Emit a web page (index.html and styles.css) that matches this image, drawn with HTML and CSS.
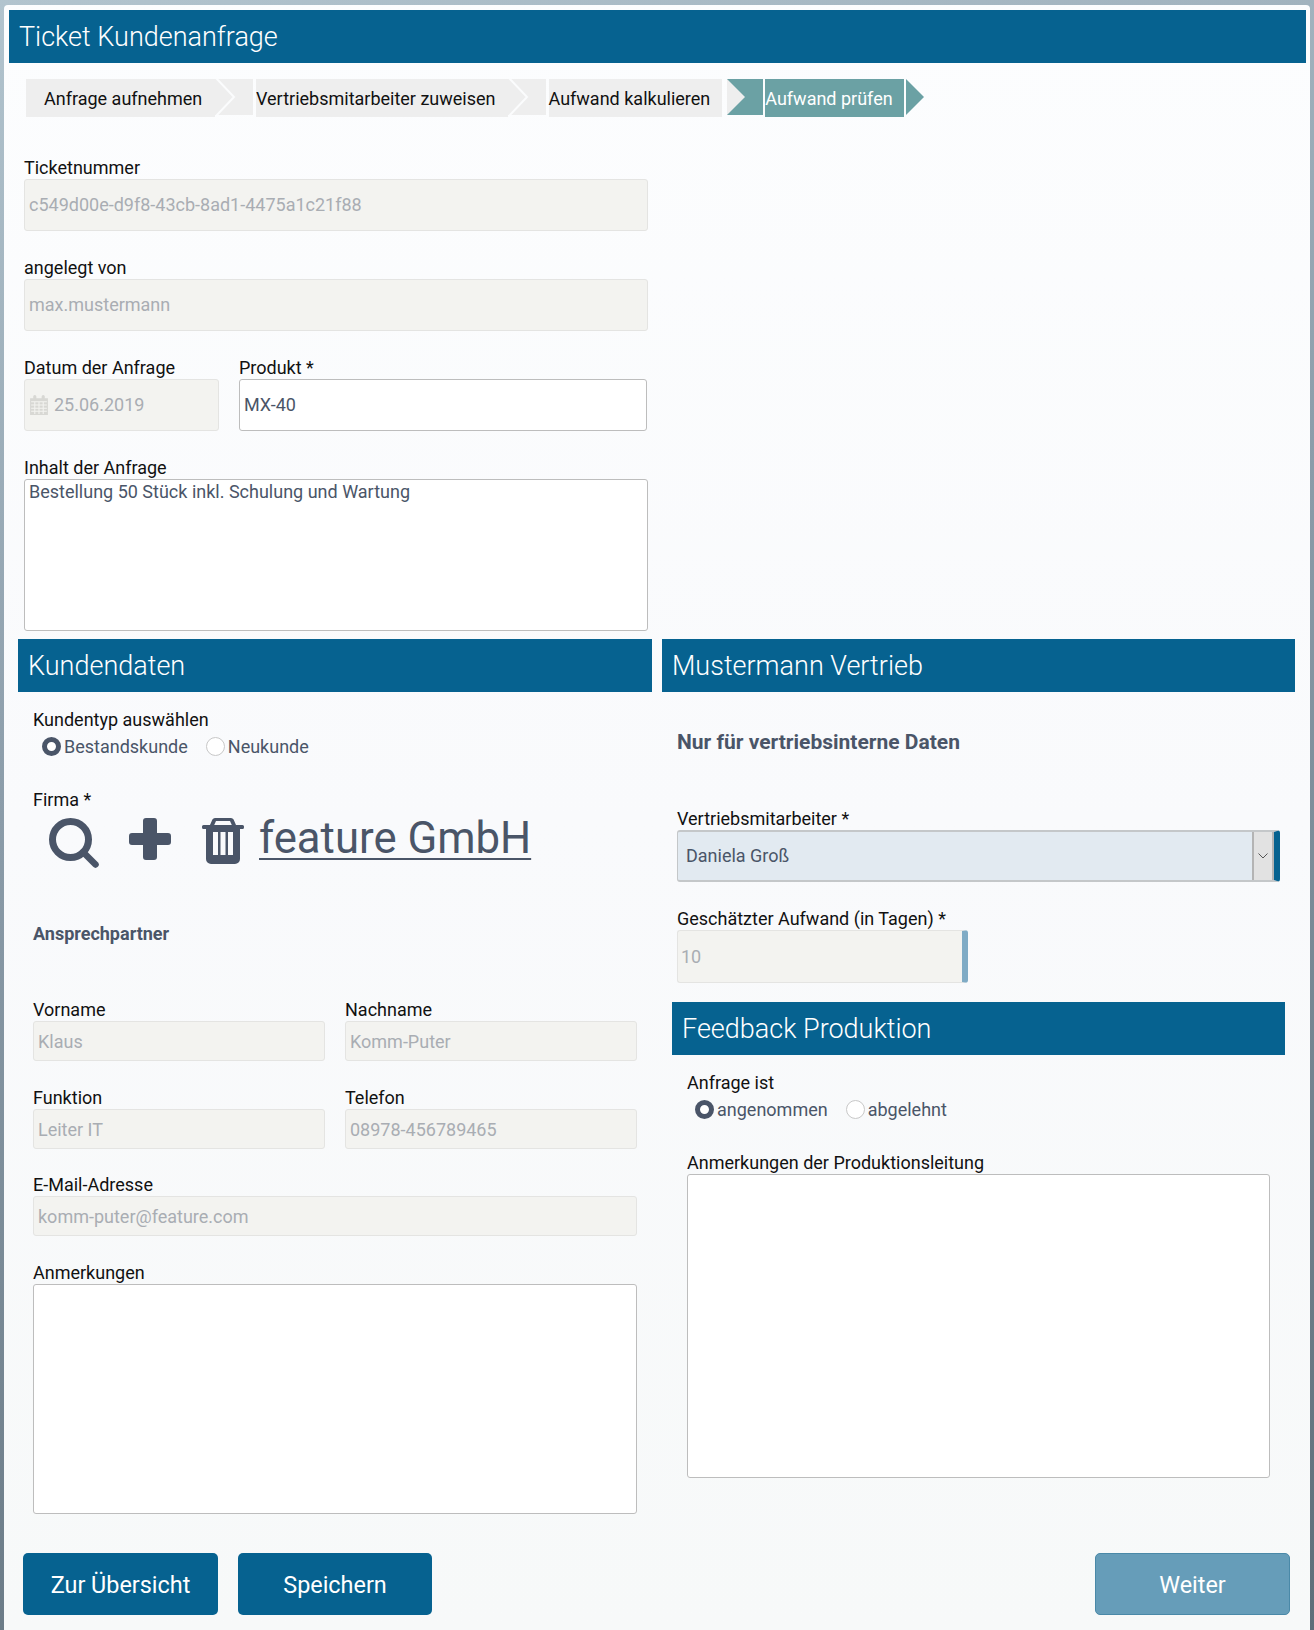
FILE: index.html
```html
<!DOCTYPE html>
<html lang="de">
<head>
<meta charset="utf-8">
<title>Ticket Kundenanfrage</title>
<link rel="stylesheet" href="styles.css">
</head>
<body>
<div class="panel">
  <h1 class="head head-main">Ticket Kundenanfrage</h1>

  <nav class="steps">
    <span class="step step-first">Anfrage aufnehmen</span>
    <svg class="chev" width="41" height="36" viewBox="0 0 41 36"><rect width="38" height="36" fill="#eeeeee"/><path d="M1 -1 L19 18 L1 37" fill="none" stroke="#fbfcfd" stroke-width="2"/></svg>
    <span class="step step-tight">Vertriebsmitarbeiter zuweisen</span>
    <svg class="chev" width="41" height="36" viewBox="0 0 41 36"><rect width="38" height="36" fill="#eeeeee"/><path d="M1 -1 L19 18 L1 37" fill="none" stroke="#fbfcfd" stroke-width="2"/></svg>
    <span class="step step-tight">Aufwand kalkulieren</span>
    <svg class="chev chev-active" width="42" height="36" viewBox="0 0 42 36"><rect x="3" width="36" height="36" fill="#6ba1a4"/><path d="M3 0 L21 18 L3 36 Z" fill="#eeeeee"/></svg>
    <span class="step step-active">Aufwand prüfen</span>
    <svg class="chev-end" width="18" height="36" viewBox="0 0 18 36"><path d="M0 0 L18 18 L0 36 Z" fill="#6ba1a4"/></svg>
  </nav>

  <section class="top-form">
    <div class="field gap-l">
      <div class="label">Ticketnummer</div>
      <div class="input tall disabled">c549d00e-d9f8-43cb-8ad1-4475a1c21f88</div>
    </div>
    <div class="field gap-l">
      <div class="label">angelegt von</div>
      <div class="input tall disabled">max.mustermann</div>
    </div>
    <div class="date-row gap-l">
      <div class="field">
        <div class="label">Datum der Anfrage</div>
        <div class="input tall disabled date">
          <svg class="cal" width="18" height="20" viewBox="0 0 17 19"><path fill="#d8d8d4" d="M0 3h3V1.500a1.500 1.500 0 0 1 3 0V3h5V1.500a1.500 1.500 0 0 1 3 0V3h3v16H0z"/><path stroke="#f3f3f0" stroke-width="1" fill="none" d="M1 6.500h15M1 9.500h15M1 12.500h15M1 15.500h15M4.500 6v12M8.500 6v12M12.500 6v12"/></svg>
          25.06.2019
        </div>
      </div>
      <div class="field">
        <div class="label">Produkt *</div>
        <div class="input tall">MX-40</div>
      </div>
    </div>
    <div class="field">
      <div class="label">Inhalt der Anfrage</div>
      <div class="input area area-top">Bestellung 50 Stück inkl. Schulung und Wartung</div>
    </div>
  </section>

  <div class="columns">
    <section class="col">
      <h2 class="head">Kundendaten</h2>
      <div class="col-body">
        <div class="label">Kundentyp auswählen</div>
        <div class="radios">
          <span class="radio on"></span><span class="radio-text">Bestandskunde</span>
          <span class="radio"></span><span class="radio-text">Neukunde</span>
        </div>
        <div class="label firma-label">Firma *</div>
        <div class="firma">
          <svg class="ico-search" width="50" height="50" viewBox="0 0 50 50"><circle cx="21.500" cy="21.500" r="18" fill="none" stroke="#4a5568" stroke-width="7"/><path d="M34 34 L46.500 46.500" stroke="#4a5568" stroke-width="6.500" stroke-linecap="round"/></svg>
          <svg class="ico-plus" width="42" height="42" viewBox="0 0 42 42"><path fill="#4a5568" d="M17 0h8a3 3 0 0 1 3 3v12h11a3 3 0 0 1 3 3v6a3 3 0 0 1-3 3H28v12a3 3 0 0 1-3 3h-8a3 3 0 0 1-3-3V27H3a3 3 0 0 1-3-3v-6a3 3 0 0 1 3-3h11V3a3 3 0 0 1 3-3z"/></svg>
          <svg class="ico-trash" width="42" height="46" viewBox="0 0 42 46"><path fill="#4a5568" fill-rule="evenodd" d="M13 0h16a3 3 0 0 1 2.600 1.500L34 7h6.500a1.500 1.500 0 0 1 1.500 1.500v1a1.500 1.500 0 0 1-1.500 1.500H38v30a5 5 0 0 1-5 5H9a5 5 0 0 1-5-5V11H1.500A1.500 1.500 0 0 1 0 9.500v-1A1.500 1.500 0 0 1 1.500 7H8l2.400-5.500A3 3 0 0 1 13 0zm1 3-1.800 4h17.600L28 3zM11 14v23h5V14zm7.500 0v23h5V14zM26 14v23h5V14z"/></svg>
          <a class="firma-link" href="#">feature GmbH</a>
        </div>
        <div class="sub-bold">Ansprechpartner</div>
        <div class="two">
          <div class="field"><div class="label">Vorname</div><div class="input short disabled">Klaus</div></div>
          <div class="field"><div class="label">Nachname</div><div class="input short disabled">Komm-Puter</div></div>
          <div class="field"><div class="label">Funktion</div><div class="input short disabled">Leiter IT</div></div>
          <div class="field"><div class="label">Telefon</div><div class="input short disabled">08978-456789465</div></div>
          <div class="field span"><div class="label">E-Mail-Adresse</div><div class="input short disabled">komm-puter@feature.com</div></div>
          <div class="field span"><div class="label">Anmerkungen</div><div class="input area area-left"></div></div>
        </div>
      </div>
    </section>

    <section class="col">
      <h2 class="head">Mustermann Vertrieb</h2>
      <div class="col-body">
        <div class="note">Nur für vertriebsinterne Daten</div>
        <div class="field sel-field">
          <div class="label">Vertriebsmitarbeiter *</div>
          <div class="input tall select">
            <span class="select-val">Daniela Groß</span>
            <span class="select-btn"><svg width="10" height="6" viewBox="0 0 10 6"><path d="M0.500 0.500 L5 5 L9.500 0.500" fill="none" stroke="#555" stroke-width="1"/></svg></span>
          </div>
        </div>
        <div class="field">
          <div class="label">Geschätzter Aufwand (in Tagen) *</div>
          <div class="input tall disabled small-num">10</div>
        </div>
      </div>
      <div class="feedback">
        <h2 class="head">Feedback Produktion</h2>
        <div class="col-body">
          <div class="label">Anfrage ist</div>
          <div class="radios radios-fb">
            <span class="radio on"></span><span class="radio-text">angenommen</span>
            <span class="radio"></span><span class="radio-text">abgelehnt</span>
          </div>
          <div class="field anm-field">
            <div class="label">Anmerkungen der Produktionsleitung</div>
            <div class="input area area-right"></div>
          </div>
        </div>
      </div>
    </section>
  </div>

  <div class="actions">
    <a class="btn btn-a" href="#">Zur Übersicht</a>
    <a class="btn btn-b" href="#">Speichern</a>
    <a class="btn btn-next" href="#">Weiter</a>
  </div>
</div>
</body>
</html>
```

FILE: styles.css
```css
* { box-sizing: border-box; }
html, body { margin: 0; padding: 0; }
body {
  height: 1630px;
  overflow: hidden;
  padding: 5px 4px 0;
  font-family: Roboto, "Liberation Sans", sans-serif;
  background: linear-gradient(165deg, #b2c4ce 0%, #8c9daa 40%, #5e6e79 100%);
}
.panel {
  height: 1625px;
  padding: 5px 4px 0 5px;
  border-radius: 4px 4px 0 0;
  background: linear-gradient(180deg, #fcfdfe 0%, #f9fafc 50%, #f7f9f9 100%);
}
.head {
  margin: 0;
  height: 53px;
  padding-left: 10px;
  background: #066290;
  color: #fff;
  font-weight: 300;
  font-size: 27px;
  line-height: 55px;
}
.steps {
  display: flex;
  align-items: flex-start;
  margin: 16px 0 0 17px;
  height: 38px;
}
.step {
  height: 38px;
  line-height: 39px;
  font-size: 18px;
  color: #111;
  background: #eeeeee;
}
.step-first { width: 189px; padding-left: 18px; }
.step-tight { padding-right: 12px; }
.chev { display: block; flex: none; }
.chev-active { margin-left: 2px; }
.step-active { width: 139px; background: #6ba1a4; color: #fff; margin-left: -1px; }
.chev-end { margin-left: 2px; flex: none; display: block; }

.label {
  height: 24px;
  line-height: 26px;
  font-size: 18px;
  color: #111;
}
.input {
  border: 1px solid #bdbdbd;
  border-radius: 3px;
  background: #fff;
  color: #4a5568;
  font-size: 18px;
  padding-left: 4px;
}
.tall { height: 52px; line-height: 50px; }
.short { height: 40px; line-height: 40px; }
.disabled { background: #f3f3f0; border-color: #e4e4e2; color: #a9adb3; }
.area { line-height: 24px; }

.top-form { width: 624px; margin: 38px 0 0 15px; }
.gap-l { margin-bottom: 24px; }
.date-row { display: grid; grid-template-columns: 195px 408px; column-gap: 20px; }
.date { display: flex; align-items: center; gap: 6px; padding-left: 5px; }
.cal { flex: none; }
.area-top { height: 152px; }

.columns { display: grid; grid-template-columns: 634px 633px; column-gap: 10px; margin: 8px 0 0 9px; }
.col-body { padding: 15px 15px 0; }
.radios { display: flex; align-items: center; height: 22px; margin: 4px 0 0 9px; }
.radios-fb { margin-left: 8px; }
.radio {
  width: 19px; height: 19px;
  border-radius: 50%;
  border: 1px solid #c8c8c8;
  background: #fff;
  flex: none;
}
.radio.on { border: 5.500px solid #4a5568; }
.radio-text { font-size: 18px; color: #4a5568; margin: 0 18px 0 3px; }
.firma-label { margin-top: 30px; }
.firma { display: flex; align-items: flex-start; height: 50px; margin-top: 7px; }
.ico-search { margin-left: 16px; flex: none; }
.ico-plus { margin-left: 30px; flex: none; }
.ico-trash { margin-left: 31px; flex: none; }
.firma-link {
  margin: -8px 0 0 15px;
  font-size: 43.700px;
  line-height: 56px;
  color: #4a5568;
  text-decoration: underline;
  text-decoration-thickness: 2px;
  text-underline-offset: 5px;
  font-weight: 400;
}
.sub-bold { margin-top: 54px; height: 24px; line-height: 24px; font-size: 18px; font-weight: 700; color: #4a5568; }
.two { display: grid; grid-template-columns: 292px 292px; column-gap: 20px; row-gap: 23.600px; margin-top: 51px; }
.span { grid-column: 1 / -1; }
.area-left { height: 230px; }

.note { margin-top: 22px; height: 26px; line-height: 26px; font-size: 21px; font-weight: 700; color: #4a5568; }
.sel-field { margin-top: 51px; margin-bottom: 24px; }
.select { display: flex; background: #e2eaf1; padding: 0 0 0 8px; border-color: #c4c7c9 #066290 #c4c7c9 #c4c7c9; border-width: 2px 6px 2px 1px; line-height: 48px; }
.select-val { flex: 1; }
.select-btn { width: 22px; display: flex; align-items: center; justify-content: center; background: #e2e2e2; border-left: 2px solid #b4b4b4; border-right: 2px solid #b4b4b4; }
.small-num { width: 291px; height: 53px; padding-left: 3px; line-height: 52px; border-right: 6px solid #7fabc5; }
.feedback { margin: 19px 10px 0; }
.anm-field { margin-top: 30px; }
.area-right { height: 304px; }

.actions { display: flex; margin: 39px 16px 0 14px; }
.btn {
  display: block;
  height: 62px;
  line-height: 65px;
  text-align: center;
  border-radius: 5px;
  background: #066290;
  color: #fff;
  font-size: 23.400px;
  text-decoration: none;
}
.btn-a { width: 195px; }
.btn-b { width: 194px; margin-left: 20px; }
.btn-next { width: 195px; margin-left: auto; background: #669db9; border: 1px solid #4a89a8; line-height: 63px; }
```
